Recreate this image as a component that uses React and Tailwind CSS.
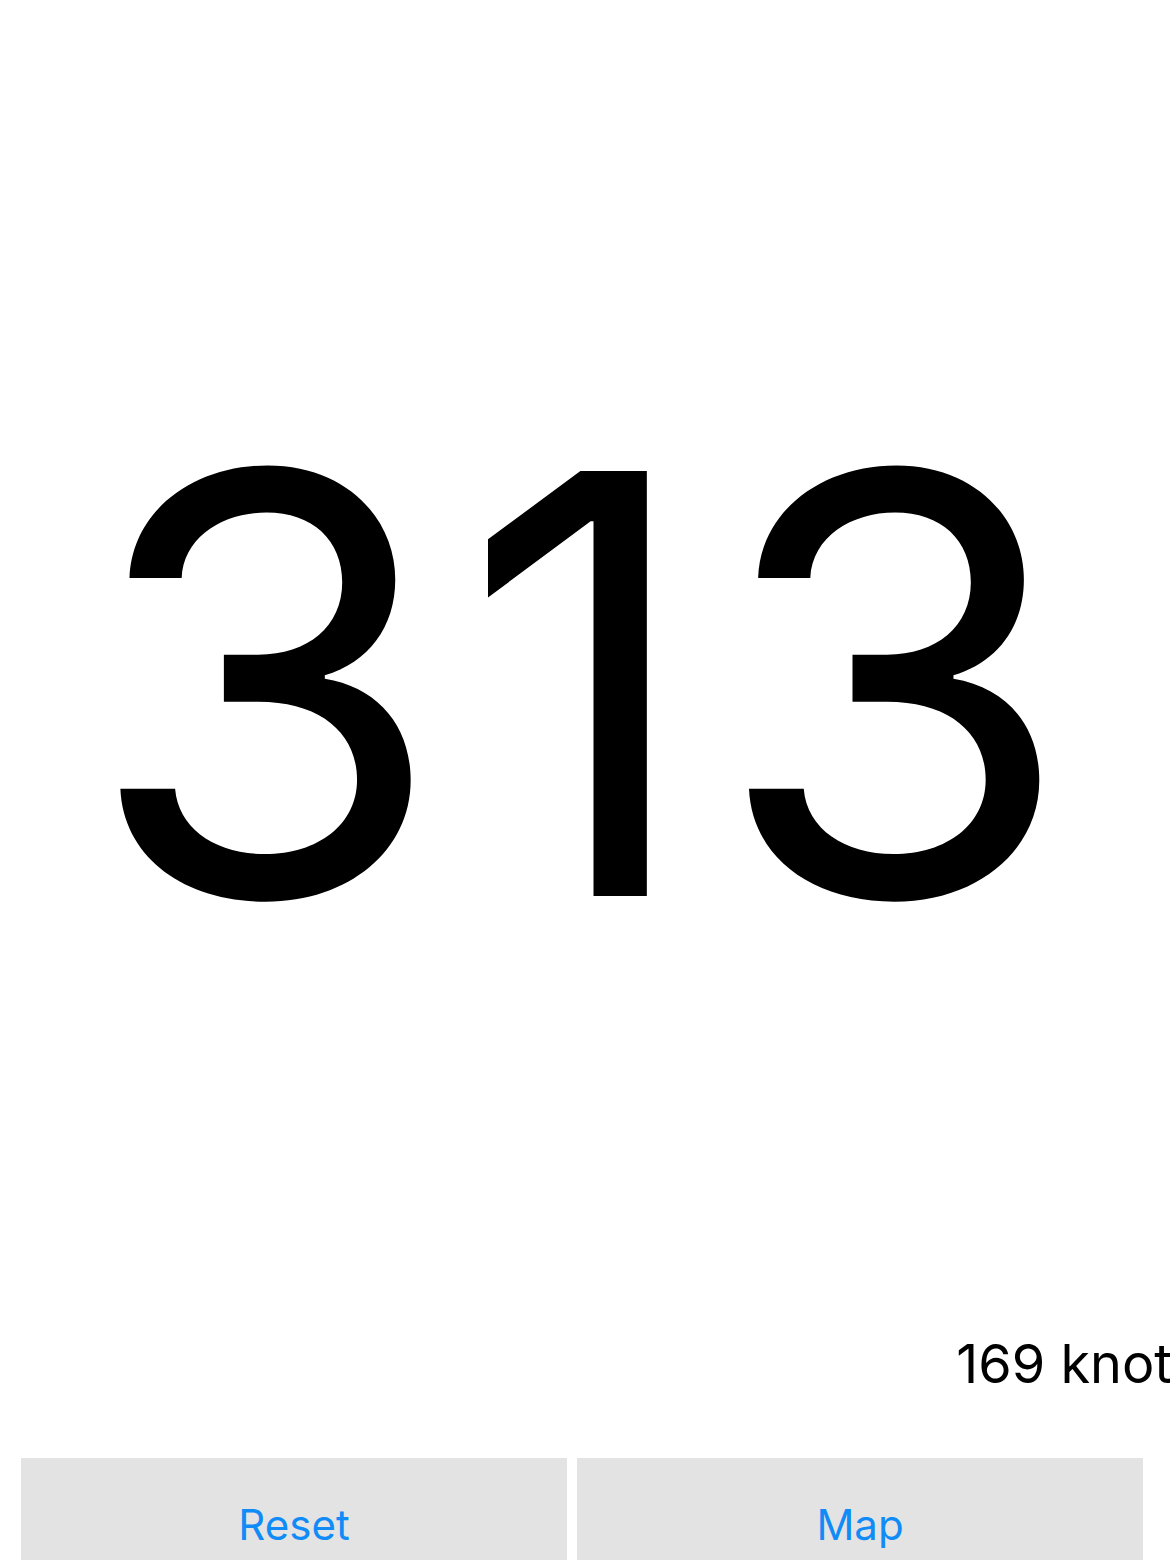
import React, { useState } from 'react';

// Heading readout: big bearing number, speed below, two action buttons at the bottom
export default function App() {
  const [heading, setHeading] = useState(313);
  const [speed] = useState(169);

  return (
    <div className="w-[1170px] h-[1560px] overflow-hidden bg-white flex flex-col" style={{ fontFamily: 'Inter, "Noto Sans", sans-serif' }}>
      <div className="h-[1320px] shrink-0 flex items-center justify-center">
        <span className="text-[584px] leading-none text-black tracking-[0.026em] mt-[48px] ml-[4px]">{heading}</span>
      </div>

      <div className="h-[138px] shrink-0 flex justify-end overflow-hidden">
        <span className="text-[54px] leading-none text-black whitespace-nowrap mt-[17px] -mr-[30px]">{speed} knots</span>
      </div>

      <div className="flex gap-[10px] pl-[21px] h-[132px] shrink-0">
        <button
          onClick={() => setHeading(0)}
          className="w-[546px] bg-[#e3e3e3] text-[#118bf6] text-[42px] flex items-center justify-center"
        >
          Reset
        </button>
        <button className="w-[566px] bg-[#e3e3e3] text-[#118bf6] text-[42px] flex items-center justify-center">
          Map
        </button>
      </div>
    </div>
  );
}
